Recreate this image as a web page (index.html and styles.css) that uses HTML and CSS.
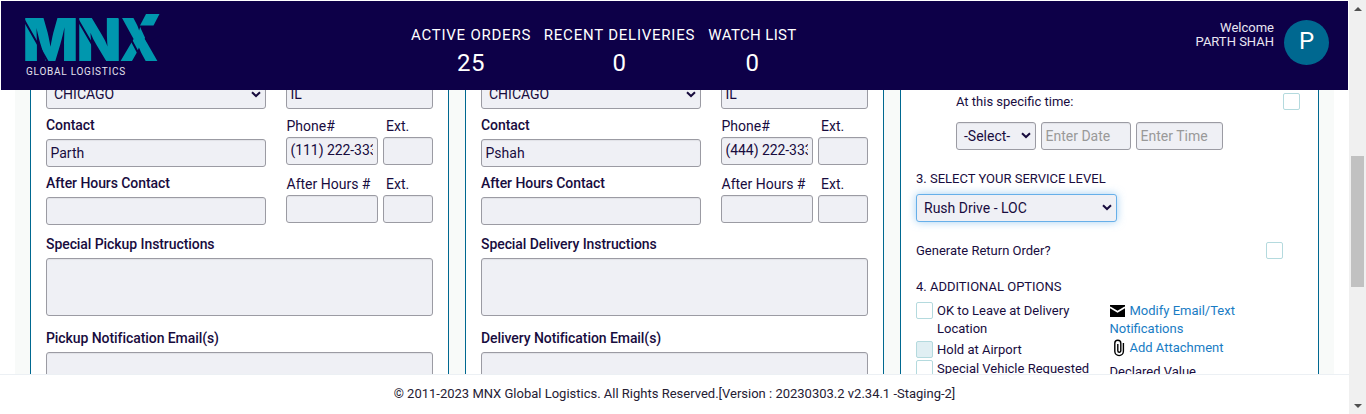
FILE: index.html
```html
<!DOCTYPE html>
<html lang="en">
<head>
<meta charset="utf-8">
<title>MNX Global Logistics</title>
<link rel="stylesheet" href="styles.css">
</head>
<body>
<div class="window">
  <div class="page">
    <header class="topbar">
      <div class="brand">
        <svg class="brand-mark" width="134" height="48" viewBox="26 14 134 48" role="img" aria-label="MNX">
          <g class="brand-letters">
            <text x="22.5" y="61" textLength="56" lengthAdjust="spacingAndGlyphs">M</text>
            <text x="76.5" y="61" textLength="45" lengthAdjust="spacingAndGlyphs">N</text>
            <text x="119.5" y="61" textLength="39" lengthAdjust="spacingAndGlyphs">X</text>
          </g>
          <path class="cut" d="M24 20 48.500 63M78 20 103 63M119 17 143.500 63"/>
          <path class="mask" d="M141 29 135 13H161V35L147 42Z"/>
          <path class="accent" d="M146 14H159.500L153.500 25.500H140Z"/>
        </svg>
        <div class="brand-sub">GLOBAL LOGISTICS</div>
      </div>
      <div class="stats">
        <div class="stat s1"><span>ACTIVE ORDERS</span><b>25</b></div>
        <div class="stat s2"><span>RECENT DELIVERIES</span><b>0</b></div>
        <div class="stat s3"><span>WATCH LIST</span><b>0</b></div>
      </div>
      <div class="user">
        <div class="user-name">Welcome<br>PARTH SHAH</div>
        <div class="avatar">P</div>
      </div>
    </header>
    <main class="content">
      <div class="columns">
        <section class="panel">
          <div class="pair">
            <div class="wide">
              <div class="field select city">CHICAGO<svg class="chev" viewBox="0 0 10 7"><path d="M1 1.200 5 5 9 1.200"/></svg></div>
              <label class="strong">Contact</label>
              <div class="field">Parth</div>
              <label class="strong">After Hours Contact</label>
              <div class="field"></div>
            </div>
            <div class="narrow">
              <div class="field city">IL</div>
              <div class="labels first"><label>Phone#</label><label>Ext.</label></div>
              <div class="phones"><div class="field"><span>(111) 222-3333</span></div><div class="field"></div></div>
              <div class="labels"><label>After Hours #</label><label>Ext.</label></div>
              <div class="phones"><div class="field"></div><div class="field"></div></div>
            </div>
          </div>
          <label class="strong notes-label">Special Pickup Instructions</label>
          <div class="field area"></div>
          <label class="strong mail-label">Pickup Notification Email(s)</label>
          <div class="field area"></div>
        </section>
        <section class="panel">
          <div class="pair">
            <div class="wide">
              <div class="field select city">CHICAGO<svg class="chev" viewBox="0 0 10 7"><path d="M1 1.200 5 5 9 1.200"/></svg></div>
              <label class="strong">Contact</label>
              <div class="field">Pshah</div>
              <label class="strong">After Hours Contact</label>
              <div class="field"></div>
            </div>
            <div class="narrow">
              <div class="field city">IL</div>
              <div class="labels first"><label>Phone#</label><label>Ext.</label></div>
              <div class="phones"><div class="field"><span>(444) 222-3333</span></div><div class="field"></div></div>
              <div class="labels"><label>After Hours #</label><label>Ext.</label></div>
              <div class="phones"><div class="field"></div><div class="field"></div></div>
            </div>
          </div>
          <label class="strong notes-label">Special Delivery Instructions</label>
          <div class="field area"></div>
          <label class="strong mail-label">Delivery Notification Email(s)</label>
          <div class="field area"></div>
        </section>
        <section class="panel options">
          <div class="line timing"><span>At this specific time:</span><i class="box"></i></div>
          <div class="when">
            <div class="field select">-Select-<svg class="chev" viewBox="0 0 10 7"><path d="M1 1.200 5 5 9 1.200"/></svg></div>
            <div class="field hint">Enter Date</div>
            <div class="field hint">Enter Time</div>
          </div>
          <h2 class="service-title">3. SELECT YOUR SERVICE LEVEL</h2>
          <div class="field select service">Rush Drive - LOC<svg class="chev" viewBox="0 0 10 7"><path d="M1 1.200 5 5 9 1.200"/></svg></div>
          <div class="line return"><span>Generate Return Order?</span><i class="box"></i></div>
          <h2 class="extra-title">4. ADDITIONAL OPTIONS</h2>
          <div class="extras">
            <div class="checks">
              <div class="check"><i class="box"></i><span>OK to Leave at Delivery Location</span></div>
              <div class="check hold"><i class="box filled"></i><span>Hold at Airport</span></div>
              <div class="check"><i class="box"></i><span>Special Vehicle Requested</span></div>
            </div>
            <div class="links">
              <a><svg class="mail" viewBox="0 0 15 12"><path class="solid" d="M0 0H15V12H0Z"/><path class="flap" d="M0 2.200 7.500 6.800 15 2.200"/></svg>Modify Email/Text Notifications</a>
              <a class="attach"><svg class="clip" viewBox="0 0 12 18"><path d="M1.800 4.500V12.300A4.300 4.300 0 0 0 10.400 12.300V4M1.800 5.500V4.200A3 3 0 0 1 7.800 4.200V11.800A1.300 1.300 0 0 1 4.800 11.800V5"/></svg>Add Attachment</a>
              <p>Declared Value</p>
            </div>
          </div>
        </section>
      </div>
    </main>
    <footer class="footer">© 2011-2023 MNX Global Logistics. All Rights Reserved.[Version : 20230303.2 v2.34.1 -Staging-2]</footer>
  </div>
  <div class="scrollbar">
    <i class="arrow up"></i>
    <i class="thumb"></i>
    <i class="arrow down"></i>
  </div>
</div>
</body>
</html>
```
FILE: styles.css
```css
* { box-sizing: border-box; }
body { margin: 0; background: #fff; color: #180c3e; font: 14px/18px Roboto, sans-serif; }
.window { display: grid; grid-template-columns: 1349px 17px; height: 414px; overflow: hidden; }
.page { display: grid; grid-template-rows: 90px 284px 40px; height: 414px; }

.topbar { display: grid; grid-template-columns: 410px 1fr 200px; margin: 1px 1px 0; background: #0d0048; color: #fff; }
.brand { padding: 13px 0 0 25px; }
.brand-mark { display: block; overflow: visible; }
.brand-letters { font: 900 59px Inter, sans-serif; fill: #0097ae; }
.cut { fill: none; stroke: #0d0048; stroke-width: 2; }
.mask { fill: #0d0048; }
.accent { fill: #0097ae; }
.brand-sub { margin-top: 4px; font: 10px/12px Roboto, sans-serif; letter-spacing: .75px; color: #e4e1ee; white-space: nowrap; }
.stats { display: flex; gap: 13px; padding-top: 24px; }
.stat { display: flex; flex-direction: column; align-items: center; white-space: nowrap; font-size: 15px; line-height: 20px; }
.s1 { width: 120px; }
.s2 { width: 151px; }
.s3 { width: 89px; }
.stat span { letter-spacing: .77px; }
.stat.s3 span { letter-spacing: .35px; }
.stat b { margin-top: 4px; font-size: 24px; line-height: 28px; font-weight: 400; letter-spacing: .4px; }
.user { display: flex; justify-content: flex-end; gap: 10px; padding: 19px 19px 0 0; }
.user-name { padding-top: 1px; font-size: 13px; line-height: 14px; text-align: right; letter-spacing: 0; white-space: nowrap; color: #e9e6f2; }
.avatar { width: 45px; height: 45px; border-radius: 50%; background: #006890; font-size: 24px; line-height: 43px; text-align: center; }

.content { overflow: hidden; }
.columns { display: grid; grid-template-columns: repeat(3, 419px); gap: 16px; width: 1319px; height: 284px; margin-left: 15px; padding-left: 15px; background: #f8faf9; }
.panel { height: 284px; padding: 0 15px; border: solid #006890; border-width: 0 1px; background: #fff; overflow: hidden; }
.pair { display: grid; grid-template-columns: 220px 147px; gap: 20px; }
.field { display: flex; align-items: center; height: 28px; padding: 0 4px 1px 3.500px; border: 1px solid #9b9ba3; border-radius: 3px; background: #eff0f5; box-shadow: inset 0 1px 1px rgba(0, 0, 0, .06); white-space: nowrap; }
.select { justify-content: space-between; padding: 0 4px 1px 7px; }
.city { margin-top: -9px; padding-bottom: 2px; }
.chev { width: 10px; height: 7px; fill: none; stroke: #180c3e; stroke-width: 2; }
label { display: block; height: 30px; line-height: 32px; white-space: nowrap; }
.strong { font-weight: 500; letter-spacing: -.07px; }
.notes-label { height: 33px; line-height: 38px; }
.mail-label { height: 36px; line-height: 44px; }
.area { height: 58px; }
.labels, .phones { display: grid; grid-template-columns: 92px 50px; gap: 5px; }
.labels label { padding-left: .5px; line-height: 38px; }
.labels label + label { padding-left: 3px; }
.labels.first label { height: 28px; line-height: 34px; }
.phones .field { padding-bottom: 2px; }
.phones span { overflow: hidden; letter-spacing: -.06px; }

.options { font-size: 13px; }
.line { display: flex; justify-content: space-between; align-items: center; height: 18px; }
.timing { margin-top: 3px; padding: 0 3px 0 40px; }
.line .box { margin-top: -2px; }
.box { flex: none; width: 17px; height: 17px; border: 1px solid #b4dade; border-radius: 2px; background: #fff; }
.filled { background: #e0eff3; }
.when { display: grid; grid-template-columns: 80px 90px 87px; gap: 5px; margin: 11px 0 0 40px; font-size: 14px; }
.hint { color: #999; }
h2 { margin: 0; font-size: 13px; font-weight: 400; line-height: 18px; }
.service-title { margin-top: 20px; }
.service { width: 201px; margin-top: 6px; border-color: #66afe9; box-shadow: 0 0 8px rgba(102, 175, 233, .6); font-size: 14px; }
.return { margin-top: 20px; padding-right: 20px; }
.extra-title { margin-top: 18px; }
.extras { display: grid; grid-template-columns: 180px 160px; gap: 13.500px; margin-top: 6px; line-height: 18px; }
.check { display: flex; gap: 4px; }
.check.hold { margin: 3px 0 1px; }
.links a { display: block; color: #197cc4; }
.links .attach { margin-top: 1px; }
.links p { margin: 6px 0 0; }
.mail { width: 15px; height: 12px; margin-right: 5px; vertical-align: -2px; }
.solid { fill: #000; }
.flap { fill: none; stroke: #fff; stroke-width: 1.6; }
.clip { width: 12px; height: 18px; margin: 0 5px 0 3px; vertical-align: -5px; fill: none; stroke: #000; stroke-width: 1.4; }

.footer { border-top: 1px solid #ecf0f4; background: #fff; font-size: 13px; line-height: 38px; text-align: center; color: #252033; }
.scrollbar { display: flex; flex-direction: column; align-items: center; height: 414px; padding: 7px 0 6px; background: #f0f0f0; }
.arrow { border: 4px solid transparent; }
.up { border-top: 0; border-bottom-color: #505050; }
.down { margin-top: auto; border-bottom: 0; border-top-color: #505050; }
.thumb { width: 13px; height: 131px; margin-top: 145px; background: #c1c1c1; }
```
